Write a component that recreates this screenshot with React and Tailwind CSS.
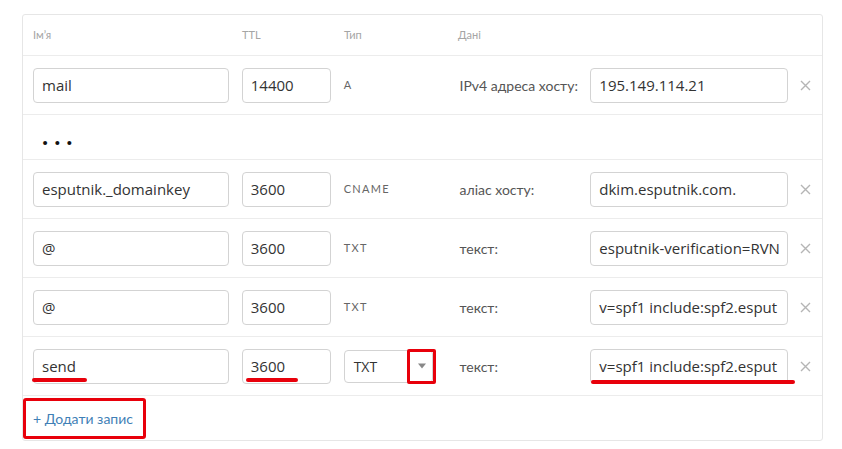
import React from "react";

const rows = [
  { name: "mail", ttl: "14400", type: "A", label: "IPv4 адреса хосту:", value: "195.149.114.21" },
  { gap: true },
  { name: "esputnik._domainkey", ttl: "3600", type: "CNAME", label: "аліас хосту:", value: "dkim.esputnik.com." },
  { name: "@", ttl: "3600", type: "TXT", label: "текст:", value: "esputnik-verification=RVN" },
  { name: "@", ttl: "3600", type: "TXT", label: "текст:", value: "v=spf1 include:spf2.esput" },
];

const inputClass =
  "h-[35px] rounded-[4px] border border-[#d3d3d3] bg-white px-2 flex items-center overflow-hidden whitespace-nowrap text-[15px] text-[#333] font-['Open_Sans',sans-serif]";

const Field = ({ value, className }) => <div className={`${inputClass} ${className}`}>{value}</div>;

const Mark = ({ className }) => <span className={`absolute h-[4px] rounded-full bg-[#e8000b] ${className}`} />;

const Remove = () => (
  <div className="flex w-[34px] justify-center">
    <svg width="11" height="11" viewBox="0 0 11 11" className="text-[#b5b5b5]">
      <path d="M1 1 L10 10 M10 1 L1 10" stroke="currentColor" strokeWidth="1.4" />
    </svg>
  </div>
);

const RecordRow = ({ row }) => (
  <div className="flex h-[59px] items-center border-b border-[#ececec] pl-[10px]">
    <Field value={row.name} className="w-[196px]" />
    <Field value={row.ttl} className="ml-[13px] w-[89px]" />
    <div className="ml-[13px] w-[114px] text-[11px] tracking-[0.12em] text-[#666]">{row.type}</div>
    <div className="w-[133px] pl-[2px] text-[14px] text-[#555]">{row.label}</div>
    <Field value={row.value} className="w-[198px]" />
    <Remove />
  </div>
);

export default function App() {
  return (
    <div className="min-h-[449px] bg-white pl-[22px] pt-[14px] font-['Lato',sans-serif]">
      <div className="w-[801px] rounded-[3px] border border-[#e6e6e6]">
        <div className="flex h-[41px] items-center border-b border-[#ececec] pl-[10px] text-[11px] text-[#a5a5a5]">
          <span className="w-[209px]">Ім’я</span>
          <span className="w-[102px]">TTL</span>
          <span className="w-[114px]">Тип</span>
          <span>Дані</span>
        </div>

        {rows.map((row, i) =>
          row.gap ? (
            <div key={i} className="flex h-[45px] items-center border-b border-[#ececec] pl-[19px] text-[26px] font-bold leading-none tracking-[6px] text-[#111]">
              <span className="-mt-[4px]">...</span>
            </div>
          ) : (
            <RecordRow key={i} row={row} />
          )
        )}

        <div className="relative flex h-[59px] items-center border-b border-[#ececec] pl-[10px]">
          <Field value="send" className="w-[196px]" />
          <Field value="3600" className="ml-[13px] w-[89px]" />
          <div className="ml-[13px] w-[114px]">
            <div className="relative flex h-[33px] w-[89px] items-center rounded-[4px] border border-[#d3d3d3] pl-[9px] text-[14px] text-[#333] font-['Open_Sans',sans-serif]">
              TXT
              <span className="absolute right-[6px] top-1/2 -translate-y-1/2 border-x-[4px] border-t-[5px] border-x-transparent border-t-[#888]" />
              <span className="absolute -right-[4px] -top-[2px] h-[35px] w-[29px] rounded-[2px] border-[3px] border-[#e8000b]" />
            </div>
          </div>
          <div className="w-[133px] pl-[2px] text-[14px] text-[#555]">текст:</div>
          <Field value="v=spf1 include:spf2.esput" className="w-[198px]" />
          <Remove />
          <Mark className="left-[9px] top-[41px] w-[55px]" />
          <Mark className="left-[223px] top-[41px] w-[52px]" />
          <Mark className="left-[568px] top-[43px] w-[204px]" />
        </div>

        <div className="flex h-[44px] items-center">
          <span className="flex h-[41px] w-[123px] items-center rounded-[3px] border-[3px] border-[#e8000b] pl-[7px] text-[14px] text-[#3f7fb6]">
            + Додати запис
          </span>
        </div>
      </div>
    </div>
  );
}
